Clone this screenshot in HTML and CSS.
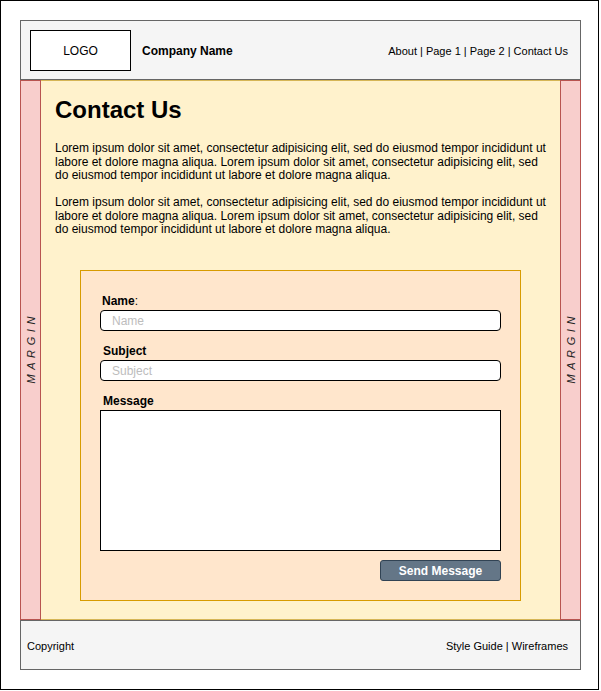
FILE: index.html
```html
<!DOCTYPE html>
<html>
<head>
<meta charset="utf-8">
<link rel="stylesheet" href="styles.css">
</head>
<body>
<div class="frame">
  <header class="header">
    <div class="logo">LOGO</div>
    <div class="company">Company Name</div>
    <nav class="nav">About | Page 1 | Page 2 | Contact Us</nav>
  </header>
  <div class="main">
    <div class="margin-col"><span class="margin-text">MARGIN</span></div>
    <section class="content">
      <h1 class="title">Contact Us</h1>
      <p class="para">Lorem ipsum dolor sit amet, consectetur adipisicing elit, sed do eiusmod tempor incididunt ut<br>labore et dolore magna aliqua. Lorem ipsum dolor sit amet, consectetur adipisicing elit, sed<br>do eiusmod tempor incididunt ut labore et dolore magna aliqua.</p>
      <p class="para">Lorem ipsum dolor sit amet, consectetur adipisicing elit, sed do eiusmod tempor incididunt ut<br>labore et dolore magna aliqua. Lorem ipsum dolor sit amet, consectetur adipisicing elit, sed<br>do eiusmod tempor incididunt ut labore et dolore magna aliqua.</p>
      <form class="form">
        <label class="label"><b>Name</b>:</label>
        <input class="field" type="text" placeholder="Name">
        <label class="label label-gap"><b>Subject</b></label>
        <input class="field" type="text" placeholder="Subject">
        <label class="label label-gap"><b>Message</b></label>
        <textarea class="message"></textarea>
        <div class="actions"><button class="send" type="button">Send Message</button></div>
      </form>
    </section>
    <div class="margin-col"><span class="margin-text">MARGIN</span></div>
  </div>
  <footer class="footer">
    <span>Copyright</span>
    <span>Style Guide | Wireframes</span>
  </footer>
</div>
</body>
</html>
```

FILE: styles.css
```css
* { box-sizing: border-box; }
html, body { margin: 0; padding: 0; background: #fff; }
body { font-family: "Liberation Sans", Arial, Helvetica, sans-serif; color: #000; }

.frame {
  width: 599px;
  height: 690px;
  border: 1px solid #000;
  padding: 19px 0 0 19px;
}

.header {
  width: 561px;
  height: 60px;
  background: #f5f5f5;
  border: 1px solid #666;
  display: flex;
  align-items: center;
  padding: 0 12px 0 9px;
}
.logo {
  width: 101px;
  height: 41px;
  border: 1px solid #000;
  background: #fff;
  display: flex;
  align-items: center;
  justify-content: center;
  font-size: 12px;
  padding-top: 2px;
}
.company {
  margin-left: 11px;
  font-size: 12px;
  font-weight: bold;
  line-height: 14px;
  padding-top: 2px;
}
.nav {
  margin-left: auto;
  font-size: 11px;
  line-height: 13px;
  padding-top: 3px;
}

.main {
  width: 561px;
  height: 540px;
  display: flex;
}
.margin-col {
  width: 21px;
  flex: none;
  background: #f8cecc;
  border: 1px solid #b85450;
  display: flex;
  align-items: center;
  justify-content: center;
}
.margin-text {
  writing-mode: vertical-rl;
  transform: rotate(180deg);
  font-style: italic;
  font-size: 11px;
  letter-spacing: 4.6px;
  color: #222;
  padding-top: 4px;
}

.content {
  flex: 1;
  background: #fff2cc;
  border-top: 1px solid #d6b656;
  border-bottom: 1px solid #d6b656;
  padding: 15px 0 0 14px;
}
.title {
  margin: 0;
  font-size: 24px;
  line-height: 28px;
  font-weight: bold;
}
.para {
  margin: 18px 0 0 0;
  font-size: 12px;
  line-height: 13.5px;
  white-space: nowrap;
}
.para + .para { margin-top: 13.5px; }

.form {
  margin: 33px 0 0 25px;
  width: 441px;
  height: 331px;
  background: #ffe6cc;
  border: 1px solid #d79b00;
  padding: 23px 0 0 19px;
  display: flex;
  flex-direction: column;
  align-items: flex-start;
}
.label {
  display: block;
  font-size: 12px;
  line-height: 14px;
  padding-left: 2px;
}
.label-gap { margin-top: 13px; padding-left: 3px; }
.field {
  margin: 2px 0 0 0;
  width: 401px;
  height: 21px;
  border: 1px solid #000;
  border-radius: 4px;
  background: #fff;
  padding: 1px 0 0 11px;
  font-family: "Liberation Sans", Arial, Helvetica, sans-serif;
  font-size: 12px;
  outline: none;
}
.field::placeholder { color: #bdbdbd; }
.message {
  margin: 2px 0 0 0;
  width: 401px;
  height: 141px;
  border: 1px solid #000;
  border-radius: 0;
  background: #fff;
  resize: none;
  padding: 0;
  font-family: "Liberation Sans", Arial, Helvetica, sans-serif;
}
.actions {
  width: 401px;
  margin-top: 9px;
  display: flex;
  justify-content: flex-end;
}
.send {
  width: 121px;
  height: 21px;
  margin: 0;
  padding: 1px 0 0 0;
  background: #647687;
  border: 1px solid #314354;
  border-radius: 3px;
  color: #fff;
  font-family: "Liberation Sans", Arial, Helvetica, sans-serif;
  font-size: 12px;
  font-weight: bold;
  line-height: 18px;
}

.footer {
  width: 561px;
  height: 50px;
  background: #f5f5f5;
  border: 1px solid #666;
  display: flex;
  align-items: center;
  justify-content: space-between;
  padding: 2px 12px 0 6px;
  font-size: 11px;
  line-height: 13px;
}
```
